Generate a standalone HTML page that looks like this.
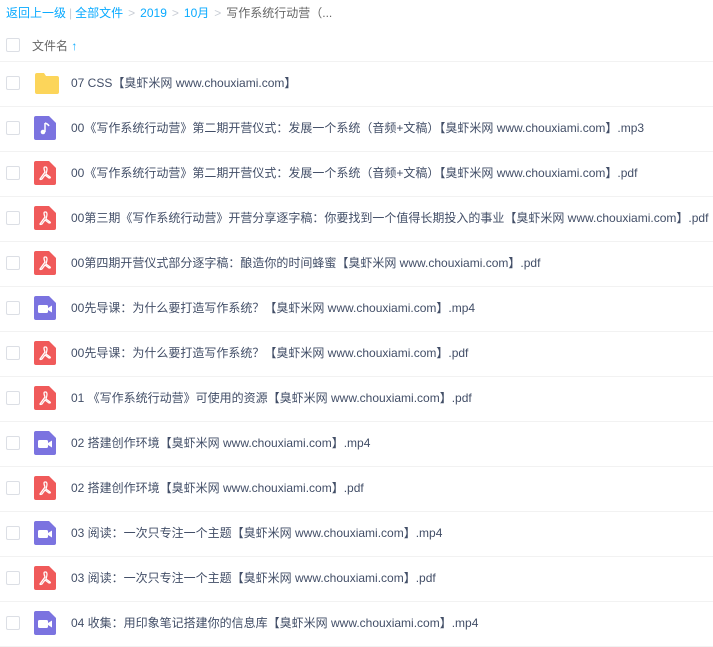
<!DOCTYPE html>
<html><head><meta charset="utf-8"><style>
body{margin:0;width:713px;height:646px;overflow:hidden;background:#fff;font-family:"Liberation Sans","Noto Sans CJK SC",sans-serif;font-size:12px;color:#424e67}
.bc{position:absolute;left:6px;top:5px;height:16px;line-height:16px;color:#09aaff;white-space:nowrap}
.bc .g{color:#c8cdd5;margin:0 5px}
.bc .c{color:#666}
.hd{position:absolute;left:0;top:33px;width:713px;height:28px;border-bottom:1px solid #f2f2f2}
.cb{position:absolute;left:6px;width:12px;height:12px;border:1px solid #dcdfe5;border-radius:2px;background:#fff}
.row{position:absolute;left:0;width:713px;height:45px;border-bottom:1px solid #f2f2f2}
.row .cb{top:15px}
.row .t{position:absolute;left:71px;top:0;line-height:45px;white-space:nowrap;color:#424e67}
.ic{position:absolute;left:34px;top:10px}
</style></head><body>
<div class="bc">返回上一级<span class="g" style="margin:0 3px">|</span>全部文件<span class="g">&gt;</span>2019<span class="g">&gt;</span>10月<span class="g">&gt;</span><span class="c">写作系统行动营（...</span></div>
<div class="hd"><div class="cb" style="top:5px"></div><span style="position:absolute;left:32px;top:4px;color:#666">文件名 <span style="color:#09aaff;font-weight:bold">↑</span></span></div>
<div id="rows"></div>
<script>
var F='<svg class="ic" width="26" height="24" viewBox="0 0 26 24"><path d="M1 4a2 2 0 0 1 2-2h7l2 3h11a2 2 0 0 1 2 2v14a2 2 0 0 1-2 2H3a2 2 0 0 1-2-2z" fill="#fcd55a"/></svg>';
var M='<svg class="ic" width="22" height="24" viewBox="0 0 22 24"><path d="M2 0h13l7 7v15a2 2 0 0 1-2 2H2a2 2 0 0 1-2-2V2a2 2 0 0 1 2-2z" fill="#7b73e0"/><path d="M11 7v9" stroke="#fff" stroke-width="1.5"/><circle cx="9" cy="16" r="2.3" fill="#fff"/><path d="M11 7q3 1 4 3" stroke="#fff" stroke-width="1.5" fill="none"/></svg>';
var P='<svg class="ic" width="22" height="24" viewBox="0 0 22 24"><path d="M2 0h13l7 7v15a2 2 0 0 1-2 2H2a2 2 0 0 1-2-2V2a2 2 0 0 1 2-2z" fill="#f05a5a"/><path d="M11 6q-2 0 0 5l-5 7q0 1 2 0l3-4 4 3q2 0 1-1l-4-3q2-6 0-7z" fill="none" stroke="#fff" stroke-width="1.3"/></svg>';
var V='<svg class="ic" width="22" height="24" viewBox="0 0 22 24"><path d="M2 0h13l7 7v15a2 2 0 0 1-2 2H2a2 2 0 0 1-2-2V2a2 2 0 0 1 2-2z" fill="#7b73e0"/><rect x="4" y="9" width="10" height="8" rx="1.5" fill="#fff"/><path d="M14 12l4-2.5v7L14 14z" fill="#fff"/></svg>';
var d=[[F,'07 CSS【臭虾米网 www.chouxiami.com】'],
[M,'00《写作系统行动营》第二期开营仪式：发展一个系统（音频+文稿）【臭虾米网 www.chouxiami.com】.mp3'],
[P,'00《写作系统行动营》第二期开营仪式：发展一个系统（音频+文稿）【臭虾米网 www.chouxiami.com】.pdf'],
[P,'00第三期《写作系统行动营》开营分享逐字稿：你要找到一个值得长期投入的事业【臭虾米网 www.chouxiami.com】.pdf'],
[P,'00第四期开营仪式部分逐字稿：酿造你的时间蜂蜜【臭虾米网 www.chouxiami.com】.pdf'],
[V,'00先导课：为什么要打造写作系统？【臭虾米网 www.chouxiami.com】.mp4'],
[P,'00先导课：为什么要打造写作系统？【臭虾米网 www.chouxiami.com】.pdf'],
[P,'01 《写作系统行动营》可使用的资源【臭虾米网 www.chouxiami.com】.pdf'],
[V,'02 搭建创作环境【臭虾米网 www.chouxiami.com】.mp4'],
[P,'02 搭建创作环境【臭虾米网 www.chouxiami.com】.pdf'],
[V,'03 阅读：一次只专注一个主题【臭虾米网 www.chouxiami.com】.mp4'],
[P,'03 阅读：一次只专注一个主题【臭虾米网 www.chouxiami.com】.pdf'],
[V,'04 收集：用印象笔记搭建你的信息库【臭虾米网 www.chouxiami.com】.mp4']];
var h='';d.forEach(function(r,i){h+='<div class="row" style="top:'+(61+45*i)+'px"><div class="cb"></div>'+r[0]+'<div class="t">'+r[1]+'</div></div>'});
document.getElementById('rows').innerHTML=h;
</script>
</body></html>
